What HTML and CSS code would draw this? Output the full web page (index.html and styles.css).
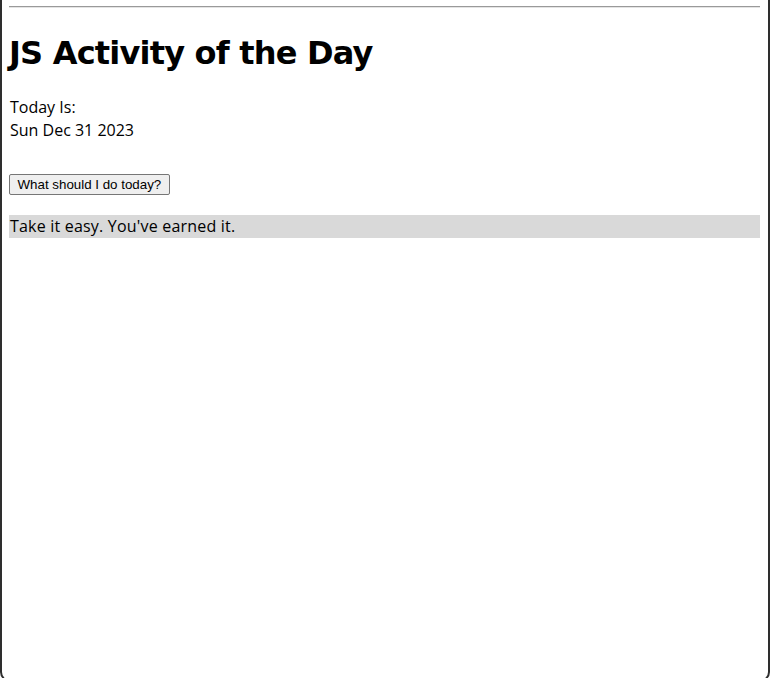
FILE: index.html
```html
<!DOCTYPE html>
<html lang="en">
<head>
<meta charset="utf-8">
<title>JS Activity of the Day</title>
<link rel="stylesheet" href="styles.css">
</head>
<body>
<div class="frame">
  <hr class="rule">
  <h1 class="title">JS Activity of the Day</h1>
  <p class="today">Today Is:<br>Sun Dec 31 2023</p>
  <div class="actions"><button class="ask" type="button">What should I do today?</button></div>
  <div class="result">Take it easy. You've earned it.</div>
</div>
</body>
</html>
```
FILE: styles.css
```css
html, body {
  margin: 0;
  padding: 0;
  background: #ffffff;
}

.frame {
  box-sizing: border-box;
  height: 682px;
  border-left: 2px solid #2e2e2e;
  border-right: 2px solid #2e2e2e;
  border-bottom: 2px solid #2e2e2e;
  border-radius: 0 0 10px 10px;
  padding: 6px 8px 0 7px;
  display: flex;
  flex-direction: column;
  font-family: "Comic Sans MS", "Open Sans", sans-serif;
  font-size: 16px;
  line-height: 23px;
  color: #000;
}

.rule {
  margin: 0;
  height: 0;
  border: 0;
  border-top: 1px solid #9a9a9a;
  border-bottom: 1px solid #e4e4e4;
}

.title {
  margin: 23px 0 0;
  font-family: "Comic Sans MS", "DejaVu Sans", sans-serif;
  font-weight: bold;
  font-size: 32px;
  line-height: 44px;
  letter-spacing: -0.8px;
}

.today {
  margin: 21px 0 0 1px;
}

.actions {
  margin-top: 32px;
  display: flex;
}

.ask {
  box-sizing: border-box;
  height: 21px;
  margin: 0;
  padding: 0 7.5px;
  font-family: "Liberation Sans", Arial, sans-serif;
  font-size: 13.33px;
  line-height: 19px;
  color: #000;
  background: #efefef;
  border: 1px solid #767676;
  border-radius: 2px;
}

.result {
  margin-top: 20px;
  height: 23px;
  padding-left: 1px;
  background: #d9d9d9;
  letter-spacing: 0.2px;
}
```
